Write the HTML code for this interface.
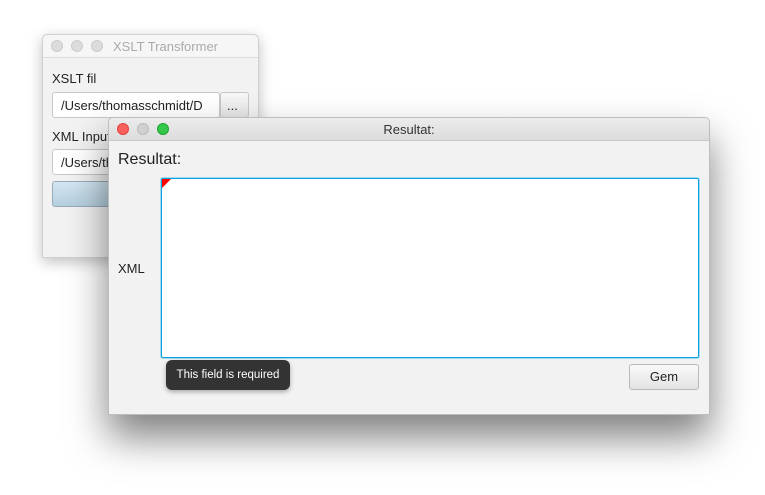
<!DOCTYPE html>
<html><head><style>
body{margin:0;width:765px;height:495px;background:#fff;position:relative;overflow:hidden;font-family:"Liberation Sans",sans-serif;}
.win{position:absolute;background:#f2f2f2;border-radius:5px 5px 0 0;}
.tb{position:absolute;left:0;right:0;top:0;height:22px;background:linear-gradient(#ececec,#dcdcdc);border-bottom:1px solid #c8c8c8;border-radius:5px 5px 0 0;}
.dot{position:absolute;top:5px;width:12px;height:12px;border-radius:50%;}
.t{position:absolute;font-size:13px;color:#222;}
.field{position:absolute;background:#fff;border:1px solid #c8c8c8;border-radius:3px;font-size:13px;color:#222;box-sizing:border-box;padding:5px 8px;white-space:nowrap;overflow:hidden;}
</style></head><body>
<div class="win" style="left:42px;top:34px;width:217px;height:224px;box-shadow:0 4px 14px rgba(0,0,0,.25);border:1px solid #d0d0d0;box-sizing:border-box;">
 <div class="tb" style="background:#f6f6f6;border-bottom:1px solid #dcdcdc;">
  <div class="dot" style="left:8px;background:#dcdcdc;border:1px solid #ccc;box-sizing:border-box"></div>
  <div class="dot" style="left:28px;background:#dcdcdc;border:1px solid #ccc;box-sizing:border-box"></div>
  <div class="dot" style="left:48px;background:#dcdcdc;border:1px solid #ccc;box-sizing:border-box"></div>
  <div style="position:absolute;left:70px;top:4px;font-size:13px;color:#aaa">XSLT Transformer</div>
 </div>
</div>
<div class="t" style="left:52px;top:71px">XSLT fil</div>
<div class="field" style="left:52px;top:92px;width:168px;height:26px">/Users/thomasschmidt/D</div>
<div class="field" style="left:220px;top:92px;width:29px;height:26px;background:linear-gradient(#f8f8f8,#e4e4e4);padding:5px 6px">...</div>
<div class="t" style="left:52px;top:129px">XML Input</div>
<div class="field" style="left:52px;top:149px;width:168px;height:26px">/Users/thomasschmidt/D</div>
<div style="position:absolute;left:52px;top:181px;width:196px;height:26px;border:1px solid #9ab;border-radius:3px;background:linear-gradient(#d3e7f2,#b5cfdf);box-sizing:border-box"></div>

<div class="win" style="left:108px;top:117px;width:602px;height:298px;box-shadow:0 22px 40px rgba(0,0,0,.5);border:1px solid #bdbdbd;box-sizing:border-box;">
 <div class="tb">
  <div class="dot" style="left:8px;background:#fc605c;border:1px solid #e0443e;box-sizing:border-box"></div>
  <div class="dot" style="left:28px;background:#d0d0d0;border:1px solid #bbb;box-sizing:border-box"></div>
  <div class="dot" style="left:48px;background:#34c84a;border:1px solid #1fa233;box-sizing:border-box"></div>
  <div style="position:absolute;left:0;right:0;top:4px;text-align:center;font-size:13px;color:#333">Resultat:</div>
 </div>
 <div style="position:absolute;left:9px;top:33px;font-size:16px;color:#222">Resultat:</div>
 <div style="position:absolute;left:9px;top:143px;font-size:13px;color:#222">XML</div>
 <div style="position:absolute;left:52px;top:60px;width:538px;height:180px;background:#fff;border:1px solid #0ba4e0;box-shadow:0 0 0 1px #9fd8ef;box-sizing:border-box;border-radius:2px"></div>
 <div style="position:absolute;left:53px;top:61px;width:0;height:0;border-top:9px solid #f00;border-right:9px solid transparent"></div>
 <div style="position:absolute;left:57px;top:242px;width:124px;height:30px;background:#333;border-radius:6px;color:#fff;font-size:11.5px;line-height:30px;text-align:center;box-shadow:0 2px 5px rgba(0,0,0,.3)">This field is required</div>
 <div style="position:absolute;left:520px;top:246px;width:70px;height:26px;border:1px solid #bbb;border-radius:3px;background:linear-gradient(#f9f9f9,#e3e3e3);font-size:13px;line-height:24px;text-align:center;box-sizing:border-box;color:#222">Gem</div>
</div>
</body></html>
